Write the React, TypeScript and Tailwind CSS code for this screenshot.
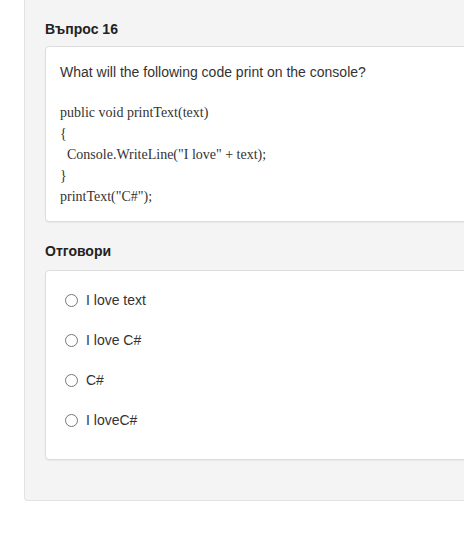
import React from "react";

const answers = ["I love text", "I love C#", "C#", "I loveC#"];

export default function App() {
  return (
    <div className="w-[464px] h-[552px] overflow-hidden bg-white" style={{ fontFamily: '"Liberation Sans", Arial, sans-serif' }}>
      <div className="ml-6 w-[480px] bg-[#f4f4f4] border border-t-0 border-r-0 border-[#e3e3e3] rounded-bl-[4px] pl-5 pt-[19px] pb-[40px]">
        <h3 className="text-[14px] leading-5 font-bold text-[#222] mb-[7px]">Въпрос 16</h3>
        <div className="bg-white border border-[#dddddd] rounded-[4px] shadow-[0_1px_1px_rgba(0,0,0,0.05)] pl-[14px] pt-[15px] pb-[14px] mb-[19px]">
          <p className="text-[14px] leading-5 text-[#333]">What will the following code print on the console?</p>
          <div className="mt-[20px] text-[14px] leading-[21px] text-[#333]" style={{ fontFamily: '"Liberation Serif", "Times New Roman", serif' }}>
            <div>public void printText(text)</div>
            <div>{"{"}</div>
            <div>&nbsp; Console.WriteLine("I love" + text);</div>
            <div>{"}"}</div>
            <div>printText("C#");</div>
          </div>
        </div>
        <h3 className="text-[14px] leading-5 font-bold text-[#222] mb-[9px]">Отговори</h3>
        <div className="bg-white border border-[#dddddd] rounded-[4px] shadow-[0_1px_1px_rgba(0,0,0,0.05)] pl-[19px] pt-[9px] pb-[19px]">
          {answers.map((a) => (
            <div key={a} className="h-10 flex items-center gap-[8px]">
              <span className="w-[13px] h-[13px] rounded-full border border-[#767676] bg-white shrink-0" />
              <span className="text-[14px] leading-5 text-[#333]">{a}</span>
            </div>
          ))}
        </div>
      </div>
    </div>
  );
}
